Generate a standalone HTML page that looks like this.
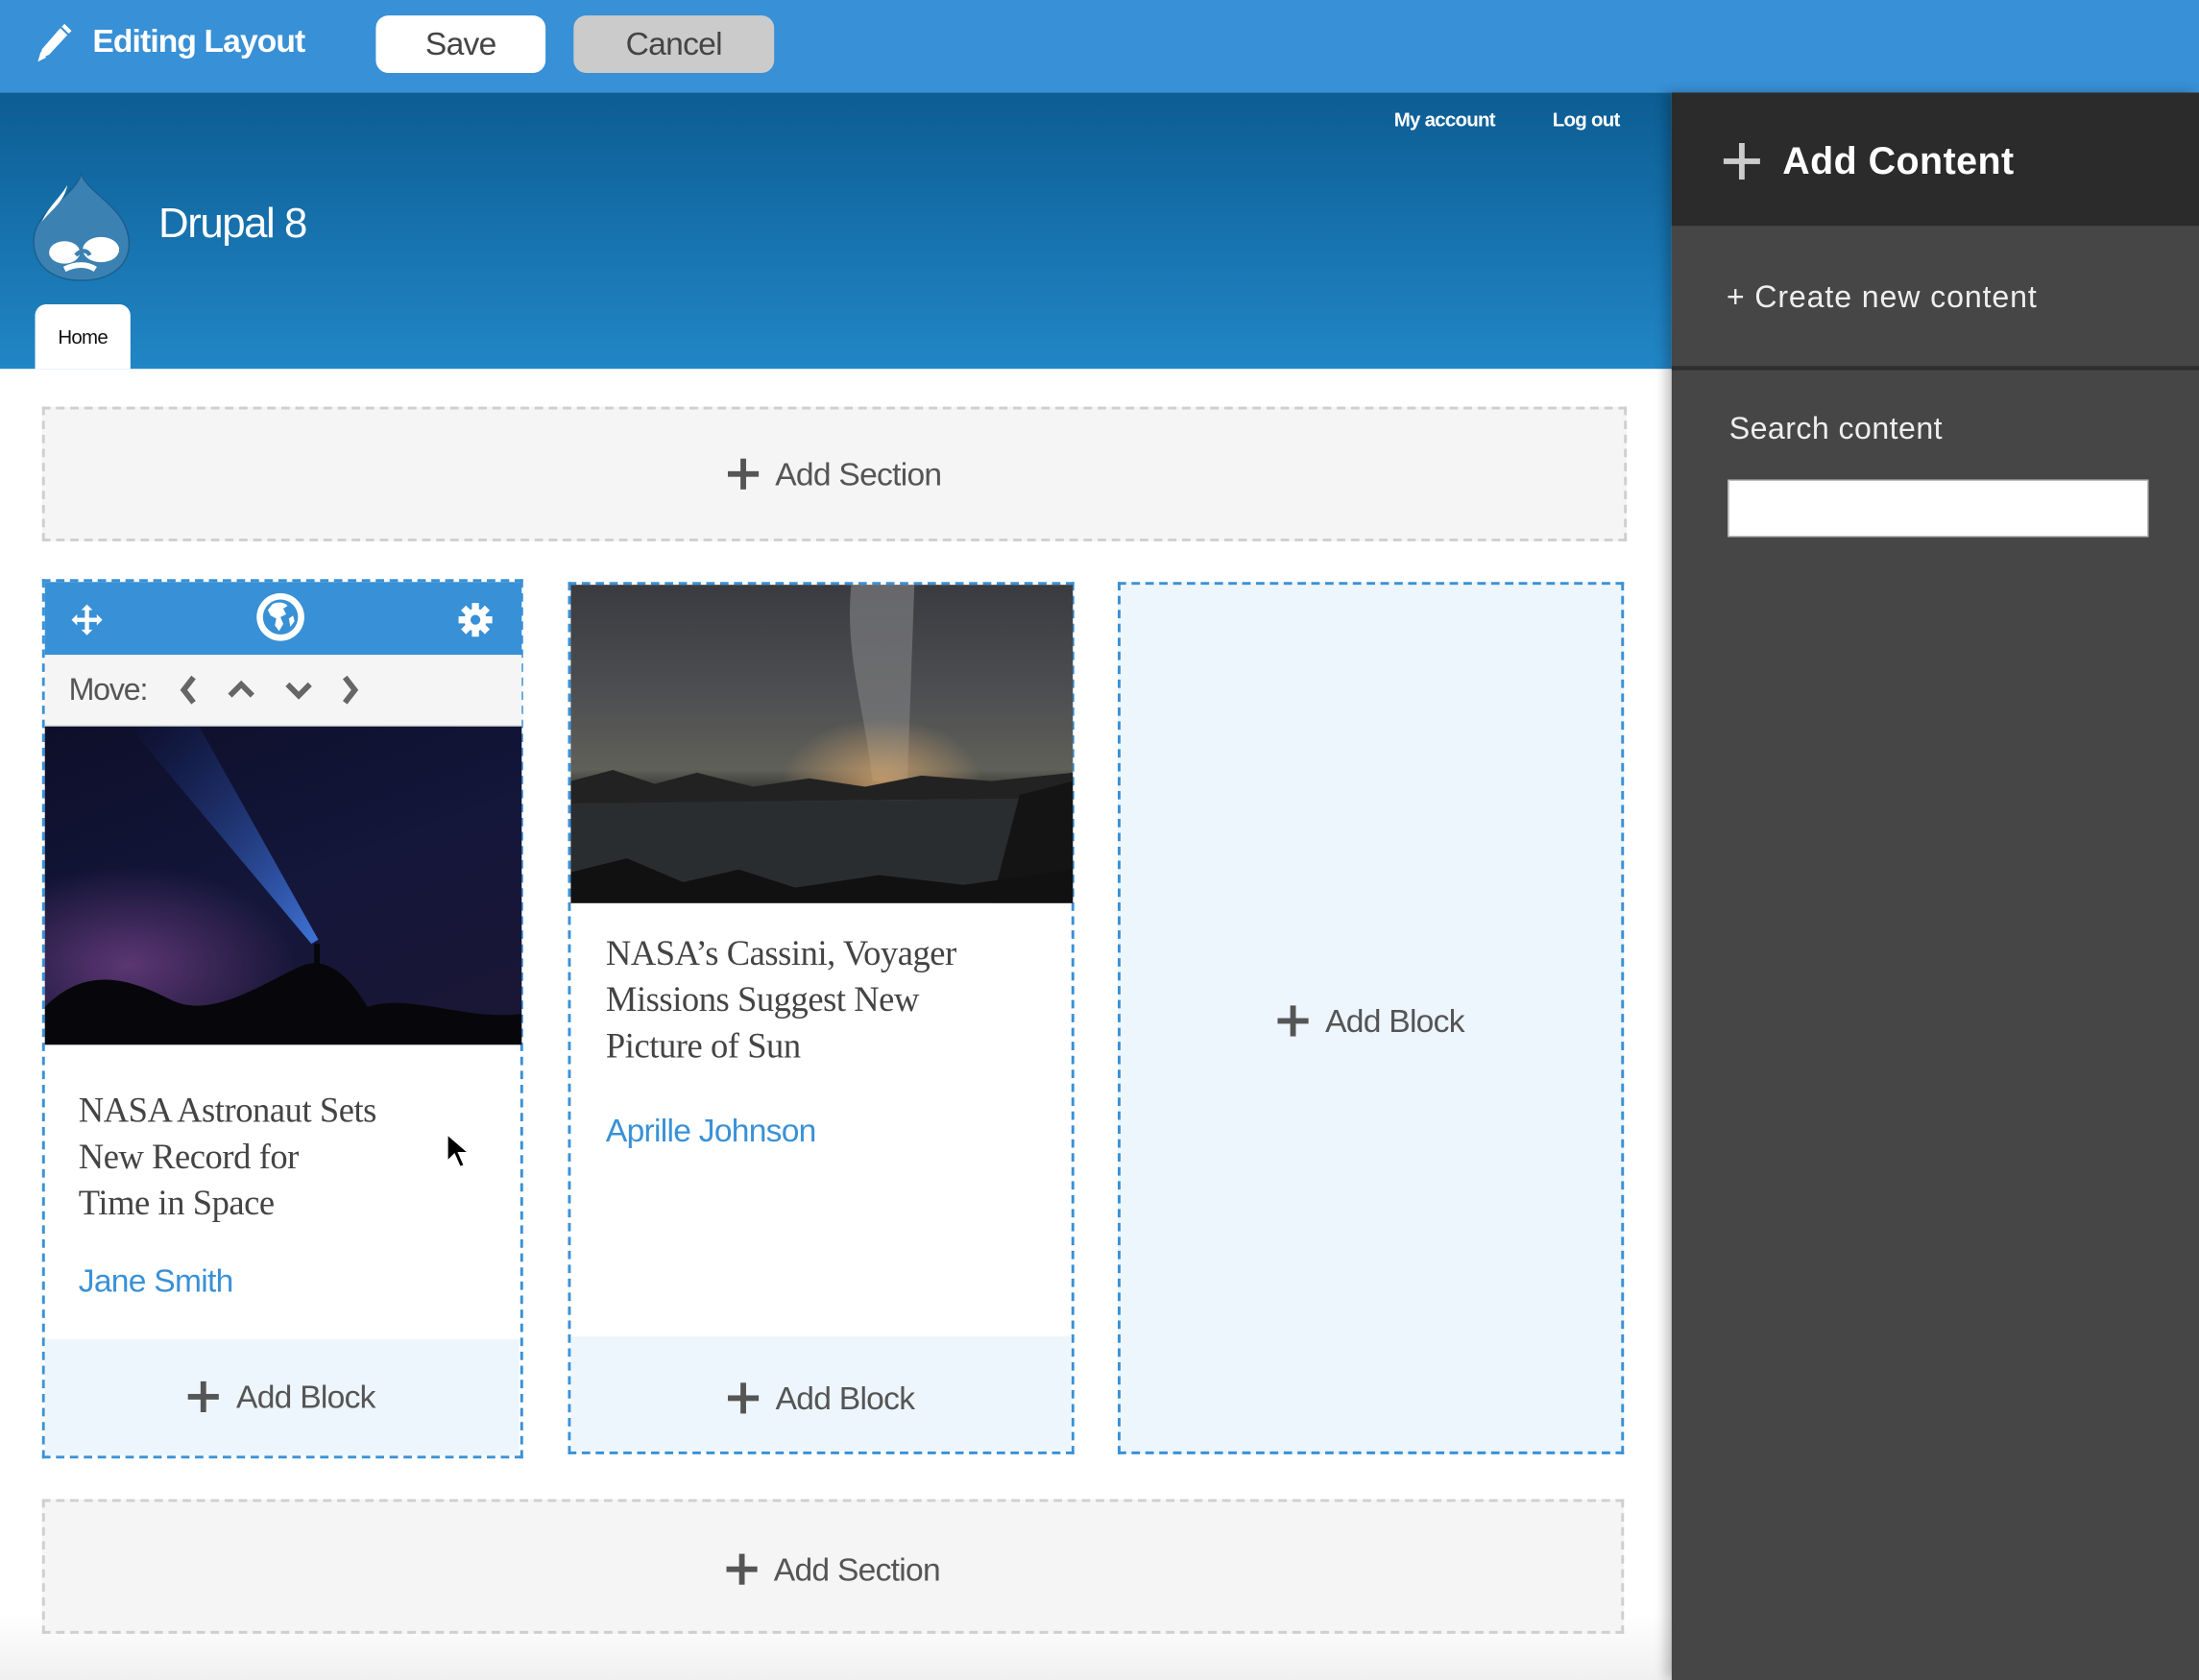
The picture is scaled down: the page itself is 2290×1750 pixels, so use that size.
<!DOCTYPE html>
<html><head><meta charset="utf-8">
<style>
html,body{margin:0;padding:0;width:2290px;height:1750px;overflow:hidden;background:#fff}
#w{position:absolute;left:0;top:0;width:1568px;height:1198px;transform:scale(1.46046,1.4608);transform-origin:0 0;font-family:"Liberation Sans",sans-serif;overflow:hidden;background:#fff}
.a{position:absolute}
.top{left:0;top:0;width:1568px;height:66px;background:#3890d6}
.btn{top:11px;height:41px;border-radius:9px;font-size:23px;color:#444;text-align:center;line-height:41px;letter-spacing:-0.5px}
.hdr{left:0;top:66px;width:1192px;height:197px;background:linear-gradient(#0c5d93,#2186c6)}
.sec{border:2px dashed #cfcfcf;background:#f5f5f5;box-sizing:border-box;text-align:center;color:#555;font-size:23px;letter-spacing:-0.5px}
.col{border:2px dashed #3a91d6;box-sizing:border-box;background:#fff}
.ab{background:#edf5fd;text-align:center;color:#555;font-size:23px;letter-spacing:-0.5px}
.plus{display:inline-block;position:relative;width:22px;height:22px;vertical-align:-3px;margin-right:12px}
.plus:before{content:"";position:absolute;left:9px;top:0;width:4px;height:22px;background:#555}
.plus:after{content:"";position:absolute;left:0;top:9px;width:22px;height:4px;background:#555}
.ttl{font-family:"Liberation Serif",serif;font-size:25px;line-height:33px;color:#444;letter-spacing:-0.3px;white-space:nowrap}
.au{color:#3a91d6;font-size:23px;letter-spacing:-0.5px}
.side{left:1192px;top:66px;width:376px;height:1132px;background:#464646;box-shadow:-4px 0 8px rgba(0,0,0,.25)}
</style></head><body><div id="w">
<div class="a top"></div>
<svg class="a" style="left:24px;top:16px" width="28" height="30" viewBox="0 0 28 30"><path d="M4 26 L6 19 L19 4 L24 9 L11 23 Z" fill="#fff"/><path d="M20 3 L22 1 L27 6 L25 8Z" fill="#fff"/><path d="M3 28 L5 21 L9 25Z" fill="#fff"/></svg>
<div class="a" style="left:66px;top:16px;color:#fff;font-weight:bold;font-size:23px;letter-spacing:-0.6px">Editing Layout</div>
<div class="a btn" style="left:268px;width:121px;background:#fff">Save</div>
<div class="a btn" style="left:409px;width:143px;background:#cbcbcb">Cancel</div>

<div class="a hdr"></div>
<div class="a" style="left:994px;top:77px;color:#fff;font-size:14px;font-weight:bold;letter-spacing:-0.5px">My account</div>
<div class="a" style="left:1107px;top:77px;color:#fff;font-size:14px;font-weight:bold;letter-spacing:-0.5px">Log out</div>
<svg class="a" style="left:22px;top:122px" width="72" height="80" viewBox="0 0 72 80"><path d="M36 2 C40 16 70 26 70 52 C70 68 56 78 36 78 C16 78 2 68 2 50 C2 28 30 20 36 2Z" fill="#3b81b2" stroke="#1a5f8f" stroke-width="1"/><path d="M26 10 C20 20 12 26 8 36 C14 28 24 22 26 10Z" fill="#fff"/><ellipse cx="24" cy="58" rx="11" ry="8" fill="#fff"/><ellipse cx="50" cy="56" rx="13" ry="9" fill="#fff"/><path d="M24 70 C32 66 40 66 46 70" stroke="#fff" stroke-width="4" fill="none"/><path d="M32 60 C36 56 40 56 42 60" stroke="#3b81b2" stroke-width="3" fill="none"/></svg>
<div class="a" style="left:113px;top:143px;color:#fff;font-size:30px;letter-spacing:-1px">Drupal 8</div>
<div class="a" style="left:25px;top:217px;width:68px;height:46px;background:#fff;border-radius:8px 8px 0 0;text-align:center;font-size:14px;line-height:46px;color:#111;letter-spacing:-0.5px">Home</div>

<div class="a" style="left:0;top:1150px;width:1192px;height:48px;background:linear-gradient(#fff,#f0f0f0)"></div>

<div class="a sec" style="left:30px;top:290px;width:1130px;height:96px;line-height:92px"><span class="plus"></span>Add Section</div>

<!-- col 1 -->
<div class="a col" style="left:30px;top:413px;width:343px;height:627px"></div>
<div class="a" style="left:32px;top:415px;width:340px;height:52px;background:#3890d6"></div>
<svg class="a" style="left:50px;top:430px" width="24" height="24" viewBox="0 0 24 24" fill="#fff"><path d="M12 1 L16 5 H13.5 V10.5 H19 V8 L23 12 L19 16 V13.5 H13.5 V19 H16 L12 23 L8 19 H10.5 V13.5 H5 V16 L1 12 L5 8 V10.5 H10.5 V5 H8Z"/></svg>
<svg class="a" style="left:181px;top:421px" width="38" height="38" viewBox="0 0 38 38"><circle cx="19" cy="19" r="17" fill="#fff"/><circle cx="19" cy="19" r="12.5" fill="#3890d6"/><path d="M13 10 C16 8 22 8 24 11 L21 13 L23 17 L19 19 L21 24 L18 29 L15 25 L16 20 L12 18 L10 14Z M25 20 L28 18 L29 22 L26 26Z" fill="#fff"/></svg>
<svg class="a" style="left:326px;top:429px" width="26" height="26" viewBox="0 0 26 26"><g fill="#fff" transform="translate(13 13)"><circle r="8"/><rect x="-2.5" y="-12" width="5" height="24"/><rect x="-2.5" y="-12" width="5" height="24" transform="rotate(45)"/><rect x="-2.5" y="-12" width="5" height="24" transform="rotate(90)"/><rect x="-2.5" y="-12" width="5" height="24" transform="rotate(135)"/></g><circle cx="13" cy="13" r="3.5" fill="#3890d6"/></svg>
<div class="a" style="left:32px;top:467px;width:340px;height:50px;background:#f5f5f5;border-bottom:1px solid #ddd"></div>
<div class="a" style="left:49px;top:479px;color:#555;font-size:22px;letter-spacing:-0.8px">Move:</div>
<svg class="a" style="left:124px;top:480px" width="140" height="24" viewBox="0 0 140 24" fill="none" stroke="#666" stroke-width="4"><path d="M14 3 L7 12 L14 21"/><path d="M40 16 L48 8 L56 16"/><path d="M81 8 L89 16 L97 8"/><path d="M122 3 L129 12 L122 21"/></svg>
<div class="a" style="left:32px;top:518px;width:340px;height:227px;overflow:hidden;background:radial-gradient(ellipse 120px 70px at 60px 170px,rgba(150,80,160,.55),transparent),linear-gradient(160deg,#0d0f2a,#14163a 50%,#1b1634)">
<svg width="340" height="227" style="position:absolute;left:0;top:0"><defs><linearGradient id="bm" x1="0" y1="0" x2="1" y2="1"><stop offset="0" stop-color="#2040a0" stop-opacity="0"/><stop offset="1" stop-color="#4a8cff"/></linearGradient></defs><path d="M60 0 L110 0 L195 152 L190 155Z" fill="url(#bm)" opacity=".8"/><path d="M0 200 C30 170 60 180 90 195 C120 210 160 180 185 170 C200 165 215 175 230 200 C260 190 300 210 340 205 L340 227 L0 227Z" fill="#07070b"/><rect x="192" y="155" width="4" height="20" fill="#07070b"/></svg></div>
<div class="a ttl" style="left:56px;top:776px">NASA Astronaut Sets<br>New Record for<br>Time in Space</div>
<div class="a au" style="left:56px;top:900px">Jane Smith</div>
<div class="a ab" style="left:32px;top:955px;width:338px;height:83px;line-height:83px"><span class="plus"></span>Add Block</div>
<svg class="a" style="left:318px;top:808px" width="18" height="28" viewBox="0 0 18 28"><path d="M1 1 L1 20 L6 15 L10 24 L13 23 L9 14 L16 14Z" fill="#000" stroke="#fff" stroke-width="1"/></svg>

<!-- col 2 -->
<div class="a col" style="left:405px;top:415px;width:361px;height:622px"></div>
<div class="a" style="left:407px;top:417px;width:358px;height:227px;overflow:hidden;background:linear-gradient(#3a3b40,#4e4f52 35%,#5f6058 58%,#3a3a36 64%,#2c2e30 75%,#1a1a1a)">
<svg width="358" height="227" style="position:absolute;left:0;top:0"><defs><radialGradient id="gl" cx="0.62" cy="0.62" r="0.2"><stop offset="0" stop-color="#e8b070" stop-opacity=".7"/><stop offset="1" stop-color="#e8b070" stop-opacity="0"/></radialGradient><linearGradient id="mw" x1="0" y1="0" x2="0" y2="1"><stop offset="0" stop-color="#bbb" stop-opacity=".35"/><stop offset="1" stop-color="#ddd" stop-opacity=".15"/></linearGradient></defs><path d="M200 0 L245 0 L240 140 L215 140 C210 90 195 50 200 0Z" fill="url(#mw)"/><rect width="358" height="227" fill="url(#gl)"/><path d="M0 140 L30 132 L60 142 L90 134 L130 144 L170 138 L210 144 L250 136 L300 140 L358 134 L358 152 L0 156Z" fill="#222"/><path d="M0 156 L358 152 L358 227 L0 227Z" fill="#2a2d30"/><path d="M320 150 L358 140 L358 227 L300 227Z" fill="#141414"/><path d="M0 205 L40 195 L80 212 L120 203 L160 216 L220 207 L280 214 L358 203 L358 227 L0 227Z" fill="#111"/></svg></div>
<div class="a ttl" style="left:432px;top:664px">NASA’s Cassini, Voyager<br>Missions Suggest New<br>Picture of Sun</div>
<div class="a au" style="left:432px;top:793px">Aprille Johnson</div>
<div class="a ab" style="left:407px;top:953px;width:357px;height:82px;line-height:88px"><span class="plus"></span>Add Block</div>

<!-- col 3 -->
<div class="a col ab" style="left:797px;top:415px;width:361px;height:622px;line-height:622px;background:#edf5fd"><span class="plus"></span>Add Block</div>

<div class="a sec" style="left:30px;top:1069px;width:1128px;height:96px;line-height:96px"><span class="plus"></span>Add Section</div>

<!-- sidebar -->
<div class="a side"></div>
<div class="a" style="left:1192px;top:66px;width:376px;height:95px;background:#2b2b2b"></div>
<div class="a" style="left:1229px;top:102px;width:26px;height:26px"><div class="a" style="left:11px;top:0;width:4px;height:26px;background:#ccc"></div><div class="a" style="left:0;top:11px;width:26px;height:4px;background:#ccc"></div></div>
<div class="a" style="left:1271px;top:100px;color:#fff;font-size:27px;font-weight:bold;letter-spacing:0.3px">Add Content</div>
<div class="a" style="left:1231px;top:199px;color:#eee;font-size:22px;letter-spacing:0.6px">+ Create new content</div>
<div class="a" style="left:1192px;top:261px;width:376px;height:3px;background:#2e2e2e"></div>
<div class="a" style="left:1233px;top:293px;color:#eee;font-size:22px;letter-spacing:0.3px">Search content</div>
<div class="a" style="left:1232px;top:342px;width:300px;height:41px;background:#fff;border:1px solid #bbb;box-sizing:border-box"></div>
</div></body></html>
